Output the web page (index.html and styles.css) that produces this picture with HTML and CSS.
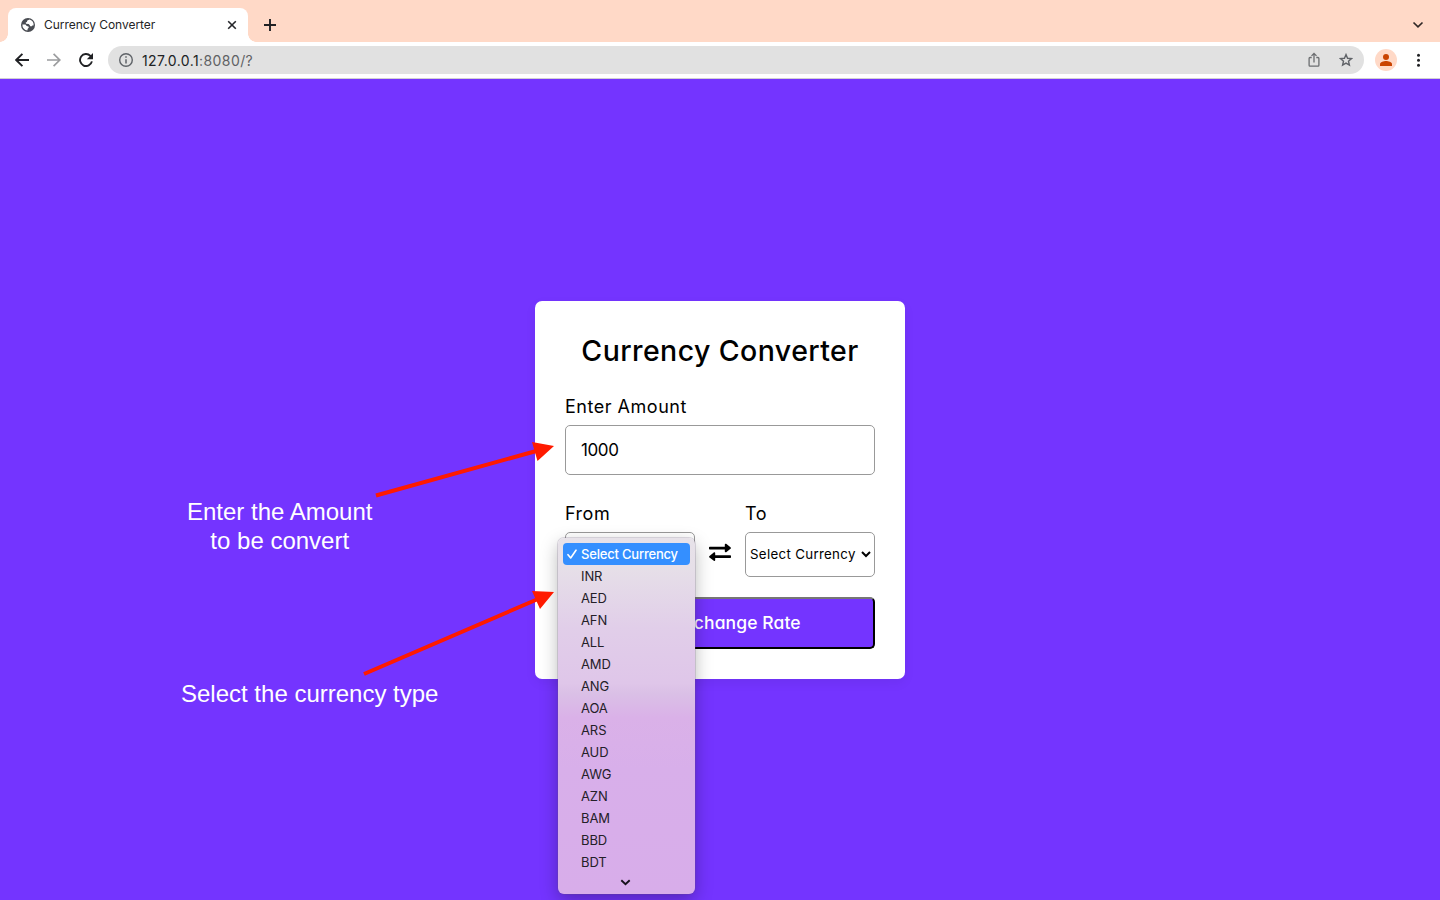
FILE: index.html
```
<!DOCTYPE html>
<html lang="en">
<head>
<meta charset="utf-8">
<title>Currency Converter</title>
<link rel="stylesheet" href="styles.css">
</head>
<body>
<header class="tabstrip">
  <div class="tab">
    <svg class="globe" width="14" height="14" viewBox="0 0 14 14"><circle cx="7" cy="7" r="7" fill="#494c52"/><path d="M8.600 1.600 6.300 2.600 5.900 4 4.700 4.600 5 5.700 7.700 6 8.800 7.300 9.200 8.300 10.800 8.200 11.700 7.300 12.600 7.600A5.700 5.700 0 0 0 8.600 1.600ZM1.400 6.500 4.500 6.600 5.700 8 7.500 8.400 7.800 9.600 6.600 10.900 6.400 12.600A5.700 5.700 0 0 1 1.400 6.500Z" fill="#fff"/></svg>
    <span class="tab-title">Currency Converter</span>
    <svg class="close" width="10" height="10" viewBox="0 0 10 10"><path d="m1.200 1.200 7.600 7.600m0-7.600L1.200 8.800" stroke="#25262a" stroke-width="1.6"/></svg>
  </div>
  <svg class="plus" width="12" height="12" viewBox="0 0 12 12"><path d="M6 0v12M0 6h12" stroke="#202124" stroke-width="1.9"/></svg>
  <svg class="tab-search" width="12" height="8" viewBox="0 0 12 8"><path d="m1.500 1.500 4.500 4.300 4.500-4.300" fill="none" stroke="#302826" stroke-width="1.700"/></svg>
</header>
<nav class="toolbar">
  <svg width="14" height="14" viewBox="0 0 14 14"><path d="M14 7H1.500M7.400 .8 1.200 7l6.200 6.200" fill="none" stroke="#202124" stroke-width="1.900"/></svg>
  <svg width="14" height="14" viewBox="0 0 14 14"><path d="M0 7h12.500M6.600.8 12.800 7l-6.200 6.200" fill="none" stroke="#9b9c9e" stroke-width="1.700"/></svg>
  <svg width="14" height="14" viewBox="0 0 14 14"><path d="M12.900 8.400A6 6 0 1 1 11.400 2.900L12.700 4.300" fill="none" stroke="#202124" stroke-width="1.900"/><path d="M14 0v6.200H7.800Z" fill="#202124"/></svg>
  <div class="address">
    <svg width="14" height="14" viewBox="0 0 14 14"><circle cx="7" cy="7" r="6.300" fill="none" stroke="#5f6368" stroke-width="1.400"/><path d="M7 6.200v4.400M7 3.300v1.500" stroke="#5f6368" stroke-width="1.500"/></svg>
    <span class="url">127.0.0.1<span class="port">:8080/?</span></span>
    <svg class="share" width="12" height="16" viewBox="0 0 12 16"><path d="M3.700 5.500H2Q1.100 5.500 1.100 6.400V13.200Q1.100 14.100 2 14.100H10Q10.900 14.100 10.900 13.200V6.400Q10.900 5.500 10 5.500H8.300M6 10.500V1.600M3.500 3.900 6 1.500 8.500 3.900" fill="none" stroke="#6b6d70" stroke-width="1.300"/></svg>
    <svg width="14" height="14" viewBox="0 0 14 14"><path d="m7 1.600 1.550 3.650 3.950.35-3 2.600.9 3.900L7 10.050 3.600 12.100l.9-3.900-3-2.600 3.950-.35Z" fill="none" stroke="#606368" stroke-width="1.400"/></svg>
  </div>
  <span class="avatar"><svg width="12" height="12" viewBox="0 0 12 12"><circle cx="6" cy="3" r="3" fill="#ca4300"/><path d="M0 12v-1.800C0 8.100 3.800 7.100 6 7.100s6 1 6 3.100V12Z" fill="#ca4300"/></svg></span>
  <svg class="kebab" width="4" height="14" viewBox="0 0 4 14"><g fill="#202124"><circle cx="2.500" cy="2.200" r="1.500"/><circle cx="2.500" cy="7.200" r="1.500"/><circle cx="2.500" cy="12.200" r="1.500"/></g></svg>
</nav>
<main class="page">
  <form class="card">
    <h1>Currency Converter</h1>
    <label class="label amount-label">Enter Amount</label>
    <div class="amount">1000</div>
    <div class="row">
      <div class="field">
        <span class="label from">From</span>
        <div class="select"></div>
        <div class="menu">
          <div class="option selected"><svg class="check" width="10" height="10" viewBox="0 0 10 10"><path d="M1 5.700 3.700 9 9 1.200" fill="none" stroke="#fff" stroke-width="1.600" stroke-linecap="round" stroke-linejoin="round"/></svg>Select Currency</div>
          <div class="option">INR</div><div class="option">AED</div><div class="option">AFN</div><div class="option">ALL</div><div class="option">AMD</div><div class="option">ANG</div><div class="option">AOA</div><div class="option">ARS</div><div class="option">AUD</div><div class="option">AWG</div><div class="option">AZN</div><div class="option">BAM</div><div class="option">BBD</div><div class="option">BDT</div>
          <svg class="more" width="11" height="7" viewBox="0 0 11 7"><path d="m1.300 1.300 4.200 4 4.200-4" fill="none" stroke="#17101c" stroke-width="1.900"/></svg>
        </div>
      </div>
      <svg class="swap" width="22" height="18" viewBox="0 0 22 18"><path d="M.8 3.800H15.800V1.700C15.800.7 16.800.3 17.500 1L21.500 4.300C22.100 4.800 22.100 5.300 21.500 5.800L17.500 9C16.800 9.600 15.800 9.200 15.800 8.300V6.500H.8Q0 6.500 0 5.700V4.600Q0 3.800.8 3.800ZM21.200 12.300H6.200V10.400C6.200 9.400 5.200 9 4.500 9.700L.5 13C-.1 13.500-.1 14 .5 14.500L4.500 17.600C5.200 18.200 6.200 17.800 6.200 16.900V15H21.200Q22 15 22 14.200V13.100Q22 12.300 21.200 12.300Z"/></svg>
      <div class="field">
        <span class="label to">To</span>
        <div class="select"><span class="value">Select Currency</span><svg width="10" height="7" viewBox="0 0 10 7"><path d="m1 1 4 4 4-4" fill="none" stroke="#000" stroke-width="2"/></svg></div>
      </div>
    </div>
    <div class="button">Get Exchange Rate</div>
  </form>
  <p class="note note-amount">Enter the Amount<br>to be convert</p>
  <p class="note note-type">Select the currency type</p>
  <svg class="arrows" width="1440" height="821" viewBox="0 79 1440 821"><g stroke="#ff1a00" stroke-width="4"><path d="M376 495.500 538 450.500M364 674 538 599"/></g><path d="m554 446-22-4 5.500 19ZM554 592l-22-1 8 18Z" fill="#ff1a00"/></svg>
</main>
</body>
</html>
```
FILE: styles.css
```
* { box-sizing: border-box; }
body { margin: 0; height: 900px; overflow: hidden; display: flex; flex-direction: column; font-family: "Inter", "Liberation Sans", sans-serif; color: #000; }
svg { display: block; flex: none; }
.tabstrip { height: 42px; background: #ffd9c7; display: flex; align-items: center; padding: 8px 16px 0 8px; }
.tab { position: relative; width: 240px; height: 34px; background: #fff; border-radius: 8px 8px 0 0; display: flex; align-items: center; padding: 0 11px 0 13px; }
.tab::before, .tab::after { content: ""; position: absolute; bottom: 0; width: 8px; height: 8px; }
.tab::before { left: -8px; background: radial-gradient(circle at 0 0, transparent 7.5px, #fff 8px); }
.tab::after { right: -8px; background: radial-gradient(circle at 100% 0, transparent 7.5px, #fff 8px); }
.tab-title { margin-left: 9px; padding-bottom: 2px; font-size: 12px; color: #242426; white-space: nowrap; letter-spacing: -.05px; }
.close { margin-left: auto; }
.plus { margin-left: 16px; }
.tab-search { margin-left: auto; }
.toolbar { height: 37px; border-bottom: 1px solid #d0ced3; background: #fff; display: flex; align-items: center; gap: 18px; padding: 0 20px 0 15px; }
.address { flex: 1; height: 28px; margin-left: -3px; border-radius: 14px; background: #e1e1e1; display: flex; align-items: center; padding: 0 11px; }
.url { margin-left: 9px; font-size: 14px; letter-spacing: .42px; color: #202124; white-space: nowrap; }
.port { color: #606164; }
.share { margin: 0 19px 0 auto; }
.avatar { width: 22px; height: 22px; margin-left: -7px; border-radius: 50%; background: #ffd9c7; display: grid; place-items: center; }
.kebab { margin-left: 1px; }
.page { position: relative; flex: 1; display: flex; justify-content: center; align-items: center; padding-top: 1px; background: #7434ff; }
.card { width: 370px; height: 378px; background: #fff; border-radius: 7px; padding: 30px; display: flex; flex-direction: column; box-shadow: 0 4px 12px rgba(0,0,0,.06); font-feature-settings: "cv11"; }
h1 { margin: 0 0 20px; height: 42px; line-height: 39px; font-size: 28.5px; font-weight: 500; letter-spacing: .42px; text-align: center; white-space: nowrap; }
.label { display: block; font-size: 18px; line-height: 27px; margin-bottom: 5px; letter-spacing: .52px; white-space: nowrap; }
.amount { height: 50px; border: 1px solid #999; border-radius: 5px; padding: 0 15px; font-size: 17px; letter-spacing: -.4px; line-height: 48px; }
.row { display: flex; justify-content: space-between; margin-top: 25px; }
.field { position: relative; width: 130px; }
.select { height: 45px; border: 1px solid #999; border-radius: 5px; display: flex; align-items: center; justify-content: space-between; padding: 0 3px 0 4px; font-size: 13.3px; letter-spacing: .32px; white-space: nowrap; }
.value { padding-bottom: 2px; }
.swap { margin-top: 43px; }
.button { height: 52px; margin-top: 20px; border: 2px outset #000; border-color: #767676 #212121 #212121 #767676; border-radius: 5px; background: #7434ff; color: #fff; font-size: 17.5px; letter-spacing: .1px; font-weight: 500; line-height: 47px; text-align: center; white-space: nowrap; }
.menu { position: absolute; z-index: 2; left: -7px; top: 38px; width: 137px; height: 356px; padding: 5px; border-radius: 6px; background: linear-gradient(#e7e2e9 0, #e6dfe8 30px, #e1cee9 90px, #dfc6e9 145px, #dac0e6 155px, #dab1e8 180px, #d8afea 230px, #d8adea 100%); box-shadow: 0 0 0 1px rgba(100,80,120,.2), 0 6px 18px rgba(0,0,0,.28); font-feature-settings: normal; }
.option { height: 22px; padding-left: 18px; font-size: 13px; line-height: 23px; letter-spacing: -.1px; color: #242028; white-space: nowrap; }
.selected { position: relative; width: 127px; border-radius: 4px; background: #348fff; color: #fff; font-weight: 500; letter-spacing: -.2px; }
.check { position: absolute; left: 4px; top: 6px; }
.more { margin: 6px 0 0 57px; }
.note { position: absolute; margin: 0; color: #fff; font: 24px/29px "Liberation Sans", sans-serif; text-align: center; white-space: nowrap; }
.note-amount { left: 187px; top: 418px; }
.note-type { left: 181px; top: 600px; }
.arrows { position: absolute; left: 0; top: 0; z-index: 3; pointer-events: none; }
```
